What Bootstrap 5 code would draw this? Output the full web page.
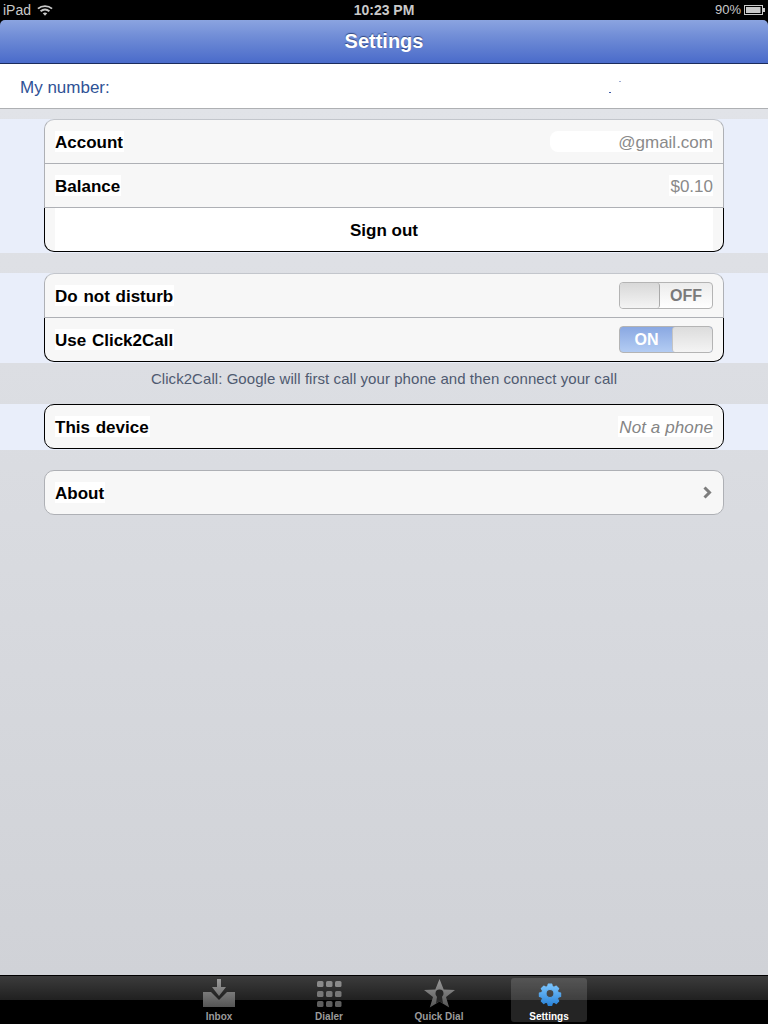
<!DOCTYPE html>
<html lang="en">
<head>
<meta charset="utf-8">
<title>Settings</title>
<link rel="stylesheet" href="https://cdn.jsdelivr.net/npm/bootstrap@5.3.0/dist/css/bootstrap.min.css">
<style>
html,body{height:1024px;overflow:hidden}
body{font-family:"Liberation Sans",Arial,sans-serif;background:#000;color:#000}
.ipad-page{height:1024px}
.status-strip{height:20px;background:#000;color:#c9c9c9;font-size:14px;line-height:20px;padding:0 3px}
.status-side{flex:1 1 0}
.status-time{font-weight:700}
.status-pct{font-size:13px;margin-right:3px}
.wifi-mark{margin-left:6px}
.title-bar{height:44px;padding-bottom:2px;border-radius:5px 5px 0 0;background:linear-gradient(#8ba4e0,#6c89d5 45%,#4a6bca);border-bottom:1px solid #1c2c5c;color:#fff;font-size:20px;font-weight:700;text-shadow:0 -1px 1px rgba(20,40,90,.7)}
.number-bar{height:45px;background:#fff;border-bottom:1px solid #aeb0b3;color:#2f5296;font-size:17px;padding-left:20px;padding-top:4px}
.speck{position:absolute;background:#3d5aa8;width:2px;height:1px}
.speck-a{left:609px;top:28px}
.speck-b{left:619px;top:17px;opacity:.5}
.content-fill{background:linear-gradient(#e1e3e8,#d0d2d7);padding-top:10px}
.blue-band{background:#e9eefa;padding-bottom:1px}
.gap-after{margin-bottom:20px}
.cell-group{width:680px;--bs-list-group-border-radius:10px}
.cell{height:44px;padding:0 10px;background:#f7f7f7;border-color:#aeb0b5;color:#000;font-size:17px;line-height:18px}
.cell:first-child{height:45px}
.cell-top{border-top-color:#c3c6cc}
.cell-dark{border-color:#000}
.cell-mixed{border-left-color:#000;border-right-color:#000;border-bottom-color:#000}
.action-fill{background:#fff;height:100%;font-weight:700;padding-top:3px;color:#000}
.lbl{background:#fff;font-weight:700;padding:3px 1px 0 0;word-spacing:1px;color:#000}
.val{background:#fff;color:#8a8a8a;padding-top:3px}
.val-mail{padding-left:68px;border-radius:8px 0 0 8px}
.val-price{padding-left:1px}
.val-device{font-style:italic;color:#858585;padding-left:1px;letter-spacing:.1px}
.flip{width:94px;height:27px;border:1px solid #b4b4b4;border-radius:4px;overflow:hidden;font-size:16px;font-weight:700}
.flip-knob{width:40px;background:linear-gradient(#d8d8d8,#f4f4f4);border-right:1px solid #a9a9a9;border-radius:3px}
.flip-off{background:linear-gradient(#ececec,#fff);color:#7a7a7a}
.flip-on{background:linear-gradient(#8aa8e2,#b3ccf3);color:#fff}
.flip-on-text{padding-left:1px}
.flip-knob-r{width:40px;background:linear-gradient(#dcdcdc,#f4f4f4);border-left:1px solid #c4c4c4;border-radius:3px}
.note-line{height:41px;color:#4f5a70;font-size:15px;letter-spacing:.06px;padding-bottom:9px}
.tab-strip{height:49px;border-top:1px solid #000;background:linear-gradient(#3c3c3c,#202020 50%,#000 50%);color:#9b9b9b;font-size:10px;font-weight:700;gap:34px;padding-top:2px}
.tab-item{width:76px;height:44px;border-radius:3px;line-height:11px}
.tab-item svg{display:block;height:30px;width:40px;margin-bottom:3px}
.tab-on{background:rgba(255,255,255,.14);color:#fff}
</style>
</head>
<body>
<div class="ipad-page d-flex flex-column">
  <div class="status-strip d-flex align-items-center">
    <div class="status-side d-flex align-items-center">
      <span>iPad</span>
      <svg class="wifi-mark" width="16" height="13" viewBox="0 0 17 13" fill="none" stroke="#c9c9c9" stroke-width="2"><path d="M1 4.500c4.300-3.600 10.700-3.600 15 0"/><path d="M3.800 7.300c2.800-2.300 6.600-2.300 9.400 0"/><path d="M8.500 12l-2.400-2.500c1.400-1 3.400-1 4.800 0z" fill="#c9c9c9" stroke="none"/></svg>
    </div>
    <div class="status-time">10:23 PM</div>
    <div class="status-side d-flex align-items-center justify-content-end">
      <span class="status-pct">90%</span>
      <svg width="21" height="10" viewBox="0 0 21 10"><rect x=".5" y=".5" width="18" height="9" fill="none" stroke="#c9c9c9"/><rect x="2" y="2" width="14.500" height="6" fill="#c9c9c9"/><rect x="19" y="3" width="2" height="4" fill="#c9c9c9"/></svg>
    </div>
  </div>

  <div class="title-bar d-flex align-items-center justify-content-center">Settings</div>

  <div class="number-bar d-flex align-items-center position-relative">
    <span>My number:</span>
    <span class="speck speck-a"></span><span class="speck speck-b"></span>
  </div>

  <div class="content-fill flex-grow-1">
    <div class="blue-band gap-after">
      <div class="list-group cell-group mx-auto">
        <div class="list-group-item cell cell-top d-flex align-items-center justify-content-between"><span class="lbl">Account</span><span class="val val-mail">@gmail.com</span></div>
        <div class="list-group-item cell d-flex align-items-center justify-content-between"><span class="lbl">Balance</span><span class="val val-price">$0.10</span></div>
        <div class="list-group-item cell cell-mixed"><div class="action-fill d-flex align-items-center justify-content-center">Sign out</div></div>
      </div>
    </div>

    <div class="blue-band">
      <div class="list-group cell-group mx-auto">
        <div class="list-group-item cell cell-top d-flex align-items-center justify-content-between">
          <span class="lbl">Do not disturb</span>
          <div class="flip flip-off d-flex"><div class="flip-knob"></div><div class="flex-grow-1 d-flex align-items-center justify-content-center">OFF</div></div>
        </div>
        <div class="list-group-item cell cell-mixed d-flex align-items-center justify-content-between">
          <span class="lbl">Use Click2Call</span>
          <div class="flip flip-on d-flex"><div class="flip-on-text flex-grow-1 d-flex align-items-center justify-content-center">ON</div><div class="flip-knob-r"></div></div>
        </div>
      </div>
    </div>

    <div class="note-line d-flex align-items-center justify-content-center">Click2Call: Google will first call your phone and then connect your call</div>

    <div class="blue-band gap-after">
      <div class="list-group cell-group mx-auto">
        <div class="list-group-item cell cell-dark d-flex align-items-center justify-content-between"><span class="lbl">This device</span><span class="val val-device">Not a phone</span></div>
      </div>
    </div>

    <div class="list-group cell-group mx-auto">
      <div class="list-group-item cell d-flex align-items-center justify-content-between">
        <span class="lbl">About</span>
        <svg width="10" height="13" viewBox="0 0 10 13" fill="none" stroke="#7d7d7d" stroke-width="3"><path d="M1.500 1.500l5 5-5 5"/></svg>
      </div>
    </div>
  </div>

  <div class="tab-strip d-flex justify-content-center">
    <div class="tab-item d-flex flex-column align-items-center">
      <svg viewBox="0 0 40 30"><defs><linearGradient id="gr" x1="0" y1="0" x2="0" y2="1"><stop offset="0" stop-color="#9a9a9a"/><stop offset="1" stop-color="#555"/></linearGradient></defs><path fill="url(#gr)" d="M18 1h4v8h5l-7 9-7-9h5zM4 14h8l8 8 8-8h8v15H4z"/></svg>
      <span>Inbox</span>
    </div>
    <div class="tab-item d-flex flex-column align-items-center">
      <svg viewBox="0 0 40 30"><g fill="#8a8a8a"><rect x="8" y="3" width="6.500" height="6" rx="1.500"/><rect x="17" y="3" width="6.500" height="6" rx="1.500"/><rect x="26" y="3" width="6.500" height="6" rx="1.500"/></g><g fill="#777"><rect x="8" y="13" width="6.500" height="6" rx="1.500"/><rect x="17" y="13" width="6.500" height="6" rx="1.500"/><rect x="26" y="13" width="6.500" height="6" rx="1.500"/></g><g fill="#5e5e5e"><rect x="8" y="23" width="6.500" height="6" rx="1.500"/><rect x="17" y="23" width="6.500" height="6" rx="1.500"/><rect x="26" y="23" width="6.500" height="6" rx="1.500"/></g></svg>
      <span>Dialer</span>
    </div>
    <div class="tab-item d-flex flex-column align-items-center">
      <svg viewBox="0 0 40 30"><path fill="url(#gr)" d="M20.500 1l4.200 10.500 11.300.5-9 7 3.200 10.500-9.700-6-9.700 6 3.200-10.500-9-7 11.300-.5z"/><path fill="#262626" d="M20.500 11.500a4 4 0 0 1 4 4c0 1.700-1 2.600-1.500 3.300l1 6.700-3.500-2.100-3.500 2.100 1-6.700c-.5-.7-1.500-1.600-1.500-3.300a4 4 0 0 1 4-4z"/></svg>
      <span>Quick Dial</span>
    </div>
    <div class="tab-item tab-on d-flex flex-column align-items-center">
      <svg viewBox="0 0 40 30"><defs><linearGradient id="gb" x1="0" y1="0" x2="0" y2="1"><stop offset="0" stop-color="#7cc6ff"/><stop offset="1" stop-color="#2a83d8"/></linearGradient></defs><g transform="translate(21 15.500) scale(.72) translate(-20 -16)"><path fill="url(#gb)" fill-rule="evenodd" d="M17.500 3h5l.8 3.400 2.400 1 3-1.800 3.500 3.500-1.800 3 1 2.400 3.400.8v5l-3.400.8-1 2.400 1.800 3-3.500 3.500-3-1.800-2.400 1-.8 3.400h-5l-.8-3.400-2.400-1-3 1.800-3.500-3.500 1.800-3-1-2.400-3.400-.8v-5l3.400-.8 1-2.400-1.800-3 3.500-3.500 3 1.800 2.400-1zM20 10.500a5.500 5.500 0 1 0 0 11 5.500 5.500 0 0 0 0-11z" stroke="url(#gb)" stroke-width="1.500" stroke-linejoin="round"/></g></svg>
      <span>Settings</span>
    </div>
  </div>
</div>
<script src="https://cdn.jsdelivr.net/npm/bootstrap@5.3.0/dist/js/bootstrap.bundle.min.js"></script>
</body>
</html>
